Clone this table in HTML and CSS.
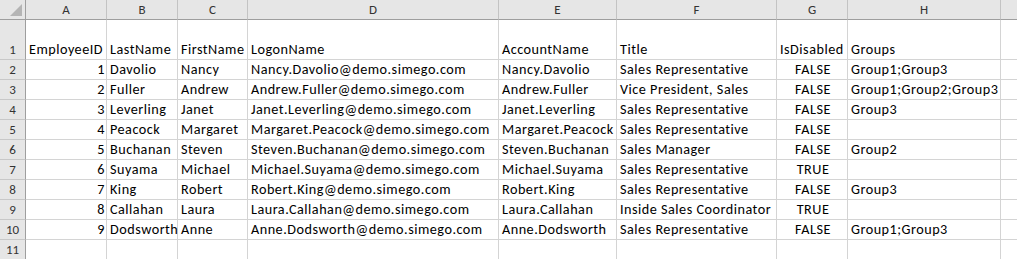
FILE: index.html
```html
<!DOCTYPE html>
<html>
<head>
<meta charset="utf-8">
<link rel="stylesheet" href="styles.css">
</head>
<body>
<div class="sheet">
  <div class="corner"><span class="tri"></span></div>
  <div class="ch">A</div><div class="ch">B</div><div class="ch">C</div><div class="ch">D</div><div class="ch">E</div><div class="ch">F</div><div class="ch">G</div><div class="ch">H</div><div class="ch last"></div>

  <div class="rh">1</div>
  <div class="c">EmployeeID</div><div class="c">LastName</div><div class="c">FirstName</div><div class="c">LogonName</div><div class="c">AccountName</div><div class="c">Title</div><div class="c">IsDisabled</div><div class="c">Groups</div><div class="c"></div>

  <div class="rh">2</div>
  <div class="c n">1</div><div class="c">Davolio</div><div class="c">Nancy</div><div class="c">Nancy.Davolio@demo.simego.com</div><div class="c">Nancy.Davolio</div><div class="c">Sales Representative</div><div class="c b">FALSE</div><div class="c">Group1;Group3</div><div class="c"></div>

  <div class="rh">3</div>
  <div class="c n">2</div><div class="c">Fuller</div><div class="c">Andrew</div><div class="c">Andrew.Fuller@demo.simego.com</div><div class="c">Andrew.Fuller</div><div class="c">Vice President, Sales</div><div class="c b">FALSE</div><div class="c">Group1;Group2;Group3</div><div class="c"></div>

  <div class="rh">4</div>
  <div class="c n">3</div><div class="c">Leverling</div><div class="c">Janet</div><div class="c">Janet.Leverling@demo.simego.com</div><div class="c">Janet.Leverling</div><div class="c">Sales Representative</div><div class="c b">FALSE</div><div class="c">Group3</div><div class="c"></div>

  <div class="rh">5</div>
  <div class="c n">4</div><div class="c">Peacock</div><div class="c">Margaret</div><div class="c">Margaret.Peacock@demo.simego.com</div><div class="c">Margaret.Peacock</div><div class="c">Sales Representative</div><div class="c b">FALSE</div><div class="c"></div><div class="c"></div>

  <div class="rh">6</div>
  <div class="c n">5</div><div class="c">Buchanan</div><div class="c">Steven</div><div class="c">Steven.Buchanan@demo.simego.com</div><div class="c">Steven.Buchanan</div><div class="c">Sales Manager</div><div class="c b">FALSE</div><div class="c">Group2</div><div class="c"></div>

  <div class="rh">7</div>
  <div class="c n">6</div><div class="c">Suyama</div><div class="c">Michael</div><div class="c">Michael.Suyama@demo.simego.com</div><div class="c">Michael.Suyama</div><div class="c">Sales Representative</div><div class="c b">TRUE</div><div class="c"></div><div class="c"></div>

  <div class="rh">8</div>
  <div class="c n">7</div><div class="c">King</div><div class="c">Robert</div><div class="c">Robert.King@demo.simego.com</div><div class="c">Robert.King</div><div class="c">Sales Representative</div><div class="c b">FALSE</div><div class="c">Group3</div><div class="c"></div>

  <div class="rh">9</div>
  <div class="c n">8</div><div class="c">Callahan</div><div class="c">Laura</div><div class="c">Laura.Callahan@demo.simego.com</div><div class="c">Laura.Callahan</div><div class="c">Inside Sales Coordinator</div><div class="c b">TRUE</div><div class="c"></div><div class="c"></div>

  <div class="rh">10</div>
  <div class="c n">9</div><div class="c">Dodsworth</div><div class="c">Anne</div><div class="c">Anne.Dodsworth@demo.simego.com</div><div class="c">Anne.Dodsworth</div><div class="c">Sales Representative</div><div class="c b">FALSE</div><div class="c">Group1;Group3</div><div class="c"></div>

  <div class="rh">11</div>
  <div class="c"></div><div class="c"></div><div class="c"></div><div class="c"></div><div class="c"></div><div class="c"></div><div class="c"></div><div class="c"></div><div class="c"></div>
</div>
</body>
</html>
```

FILE: styles.css
```css
html, body {
  margin: 0;
  padding: 0;
  background: #ffffff;
  overflow: hidden;
}

.sheet {
  display: grid;
  grid-template-columns: 26px 81px 71px 70px 251px 118px 160px 71px 153px 40px;
  grid-template-rows: 20px 40px repeat(10, 20px);
  font-family: Carlito, Lato, "Liberation Sans", sans-serif;
  font-size: 14.2px;
  letter-spacing: 0.5px;
  color: #000000;
  width: 1017px;
  height: 259px;
  overflow: hidden;
}

.corner {
  position: relative;
  background: #e6e6e6;
  border-right: 1px solid #9e9e9e;
  border-bottom: 1px solid #9e9e9e;
}

.tri {
  position: absolute;
  right: 3px;
  bottom: 3px;
  width: 0;
  height: 0;
  border-left: 12px solid transparent;
  border-bottom: 12px solid #b4b4b4;
}

.ch {
  background: #e6e6e6;
  border-right: 1px solid #c3c3c3;
  border-bottom: 1px solid #9e9e9e;
  display: flex;
  align-items: center;
  justify-content: center;
  font-size: 13px;
  letter-spacing: 0;
  color: #333333;
  line-height: 19px;
}

.rh {
  background: #e6e6e6;
  border-right: 1px solid #9e9e9e;
  border-bottom: 1px solid #c8c8c8;
  display: flex;
  align-items: flex-end;
  justify-content: center;
  font-size: 13px;
  letter-spacing: 0;
  color: #333333;
  line-height: 19px;
}

.c {
  border-right: 1px solid #d4d4d4;
  border-bottom: 1px solid #d4d4d4;
  display: flex;
  align-items: flex-end;
  padding: 0 1px 0 3px;
  line-height: 19px;
  white-space: nowrap;
  overflow: visible;
  min-width: 0;
}

.n {
  justify-content: flex-end;
}

.b {
  justify-content: center;
}
```
